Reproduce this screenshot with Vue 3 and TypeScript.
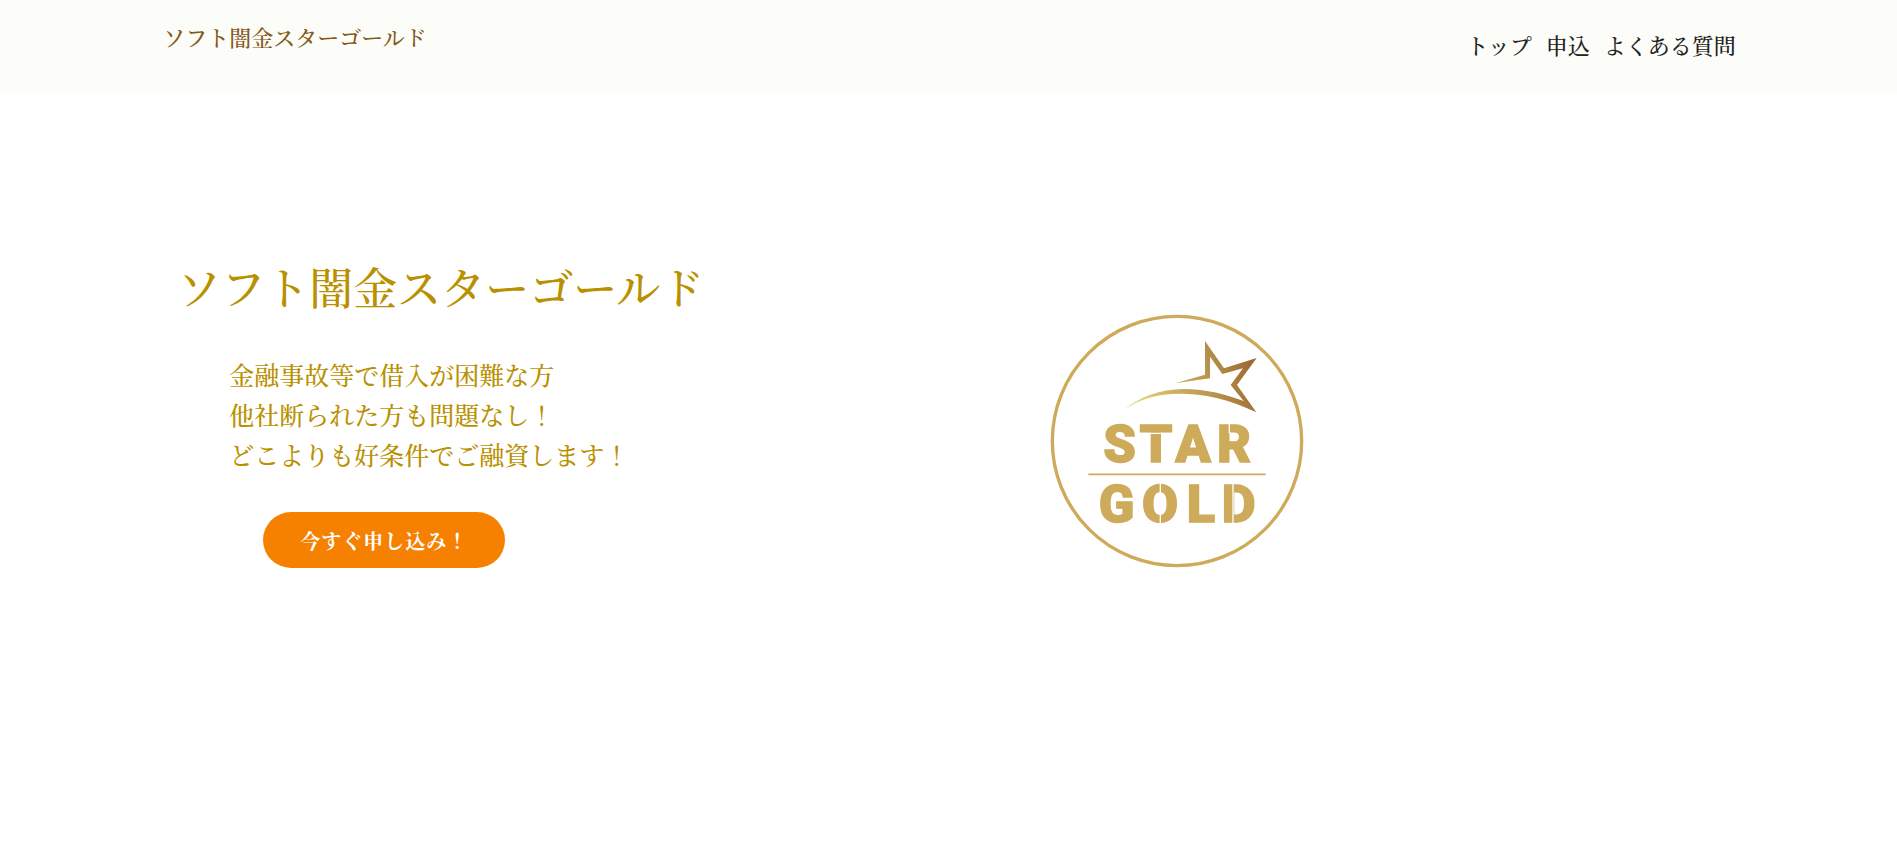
<script setup lang="ts">
interface NavItem {
  label: string
  href: string
}

const siteName = 'ソフト闇金スターゴールド'

const navItems: NavItem[] = [
  { label: 'トップ', href: '#top' },
  { label: '申込', href: '#apply' },
  { label: 'よくある質問', href: '#faq' },
]

const leadLines: string[] = [
  '金融事故等で借入が困難な方',
  '他社断られた方も問題なし！',
  'どこよりも好条件でご融資します！',
]
</script>

<template>
  <div id="top" class="page">
    <header class="header">
      <div class="container header-inner">
        <a class="brand" href="#top">{{ siteName }}</a>
        <nav class="nav">
          <a v-for="item in navItems" :key="item.href" class="nav-link" :href="item.href">{{ item.label }}</a>
        </nav>
      </div>
    </header>

    <main class="container hero">
      <section class="intro">
        <h1 class="title">{{ siteName }}</h1>
        <p class="lead">
          <span v-for="line in leadLines" :key="line" class="lead-line">{{ line }}</span>
        </p>
        <button type="button" class="cta">今すぐ申し込み！</button>
      </section>

      <svg class="emblem" viewBox="0 0 840 840" role="img" aria-label="STAR GOLD">
        <defs>
          <linearGradient id="shine" gradientUnits="userSpaceOnUse" x1="255" y1="310" x2="650" y2="200">
            <stop offset="0" stop-color="#f0e08c" />
            <stop offset="0.3" stop-color="#d5b865" />
            <stop offset="0.65" stop-color="#b8934d" />
            <stop offset="1" stop-color="#996631" />
          </linearGradient>
        </defs>
        <circle cx="411" cy="423" r="374" fill="none" stroke="#cdab5a" stroke-width="10" />
        <path
          fill="url(#shine)"
          d="M405 250L495 224V123L552 205L650 174L591 255L649 337C565 296 490 281 420 281C350 281 300 298 255 327C300 290 360 268 430 267C500 267 560 284 611 303L572 255L609 205L547 222L510 170V235Z"
        />
        <g class="letters">
          <text x="239" y="487">S</text>
          <text x="348" y="487">T</text>
          <text x="459" y="487">A</text>
          <text x="582" y="487">R</text>
          <text x="230" y="665">G</text>
          <text x="360" y="665">O</text>
          <text x="483" y="665">L</text>
          <text x="596" y="665">D</text>
        </g>
        <path d="M145 523H677" stroke="#cdab5a" stroke-width="5" />
        <path d="M330 400H366M568 370V400M361 546V580M361 643V672M579 546V670" stroke="#fff" stroke-width="4" />
      </svg>
    </main>
  </div>
</template>

<style>
body {
  margin: 0;
  background: #fff;
}
</style>

<style scoped>
.page {
  font-family: "Noto Serif CJK JP", "Noto Serif JP", "Yu Mincho", "Noto Sans CJK JP", serif;
  font-weight: 500;
}

.container {
  width: 83%;
  margin: 0 auto;
}

.header {
  background: #fcfcf8;
}

.header-inner {
  display: flex;
  justify-content: space-between;
  align-items: flex-start;
  box-sizing: border-box;
  min-height: 91px;
  padding: 21px 0 16px;
}

.brand,
.nav-link {
  font-size: 22px;
  line-height: 32px;
  text-decoration: none;
}

.brand {
  padding-left: 2px;
  color: #85591a;
}

.nav {
  display: flex;
  gap: 14px;
  padding-top: 8px;
}

.nav-link {
  color: #222;
}

.hero {
  display: grid;
  grid-template-columns: 5fr 4fr;
  align-items: start;
  padding-top: 157px;
}

.intro {
  padding-left: 16px;
}

.title {
  margin: 0;
  color: #b99100;
  font-size: 44px;
  font-weight: 500;
  line-height: 76px;
}

.lead {
  margin: 30px 0 38px 52px;
  color: #b99100;
  font-size: 25px;
  line-height: 40px;
}

.lead-line {
  display: block;
}

.cta {
  display: block;
  margin-left: 86px;
  padding: 13px 37px 11px;
  border: 0;
  border-radius: 28px;
  background: #f68100;
  color: #fff;
  font-family: inherit;
  font-size: 20px;
  font-weight: 700;
  line-height: 32px;
  letter-spacing: 1px;
}

.emblem {
  width: 280px;
  height: 280px;
  margin: 52px 0 0 4px;
}

.letters {
  fill: #cdab5a;
  stroke: #cdab5a;
  stroke-width: 4px;
  font-family: Roboto, "Liberation Sans", Arial, sans-serif;
  font-size: 157px;
  font-weight: 900;
  text-anchor: middle;
}
</style>
